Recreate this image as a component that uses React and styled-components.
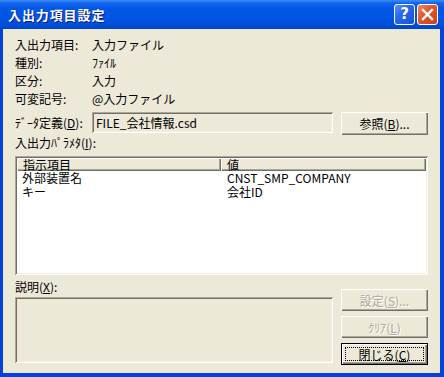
import React from 'react';
import styled, { createGlobalStyle } from 'styled-components';

const Global = createGlobalStyle`
  html, body { margin: 0; padding: 0; background: #fff; }
  body { font-family: "Noto Sans CJK JP", sans-serif; }
`;

const FONT = `"Noto Sans CJK JP", "Noto Sans CJK SC", sans-serif`;

const Window = styled.div`
  width: 444px;
  height: 377px;
  display: flex;
  flex-direction: column;
  font-family: ${FONT};
  font-size: 12px;
  color: #000;
`;

const TitleBar = styled.div`
  height: 29px;
  flex: none;
  display: flex;
  align-items: center;
  padding: 0 6px 0 8px;
  background: linear-gradient(
    to bottom,
    #3d8ef8 0px,
    #1465ee 3px,
    #0258e6 8px,
    #0055e3 18px,
    #0050da 24px,
    #0044c8 29px
  );
`;

const Title = styled.div`
  flex: 1;
  color: #fff;
  font-weight: bold;
  font-size: 13px;
  letter-spacing: 0.9px;
  line-height: 16px;
  text-shadow: 1px 1px #0a1a88;
  margin-top: 1px;
`;

const CaptionButton = styled.div`
  width: 21px;
  height: 21px;
  box-sizing: border-box;
  border: 1px solid #fff;
  border-radius: 3px;
  margin-left: 2px;
  display: flex;
  align-items: center;
  justify-content: center;
  background: ${(p) =>
    p.$close
      ? 'linear-gradient(135deg, #f08a62 0%, #e2582f 40%, #cc4018 100%)'
      : 'linear-gradient(135deg, #5a92fb 0%, #2a68ee 40%, #1a52d6 100%)'};
  color: #fff;
  font-family: "DejaVu Sans", sans-serif;
  font-weight: bold;
  font-size: 15px;
  line-height: 1;
`;

const Client = styled.div`
  flex: 1;
  background: #ece9d8;
  border-style: solid;
  border-color: #0841d6;
  border-width: 0 4px 4px 3px;
  padding: 7px 12px 0 12px;
  display: flex;
  flex-direction: column;
`;

const InfoGrid = styled.div`
  display: grid;
  grid-template-columns: 77px 1fr;
  grid-auto-rows: 18px;
  align-items: center;
  line-height: 14px;
`;

const Text = styled.span`
  white-space: nowrap;
  line-height: 14px;
`;

const FieldRow = styled.div`
  margin-top: 4px;
  display: grid;
  grid-template-columns: 77px 241px 95px;
  align-items: start;
`;

const FieldLabel = styled.span`
  line-height: 21px;
  white-space: nowrap;
`;

const sunken = `
  box-shadow:
    inset 1px 1px #aca899,
    inset -1px -1px #ffffff,
    inset 2px 2px #716f64,
    inset -2px -2px #f1efe2;
`;

const ReadOnlyField = styled.div`
  height: 21px;
  box-sizing: border-box;
  padding: 0 4px;
  background: #ece9d8;
  ${sunken}
  line-height: 21px;
  white-space: nowrap;
`;

const Button = styled.div`
  height: 22px;
  box-sizing: border-box;
  display: flex;
  align-items: center;
  justify-content: center;
  background: #ece9d8;
  white-space: nowrap;
  color: ${(p) => (p.$disabled ? '#aca899' : '#000')};
  text-shadow: ${(p) => (p.$disabled ? '1px 1px #ffffff' : 'none')};
  border: ${(p) => (p.$default ? '1px solid #000' : 'none')};
  box-shadow:
    inset 1px 1px #ffffff,
    inset -1px -1px #716f64,
    inset -2px -2px #aca899;
  padding: 3px;
`;

const BrowseButton = styled(Button)`
  margin-left: 8px;
  height: 23px;
`;

const FocusRect = styled.div`
  flex: 1;
  align-self: stretch;
  display: flex;
  align-items: center;
  justify-content: center;
  outline: 1px dotted #000;
  outline-offset: -1px;
`;

const U = styled.span`
  text-decoration: underline;
  text-underline-offset: 1px;
`;

const SectionLabel = styled.div`
  height: 14px;
  line-height: 14px;
  white-space: nowrap;
  margin-top: ${(p) => p.$mt || 0}px;
`;

const ListBox = styled.div`
  margin-top: 6px;
  height: 119px;
  box-sizing: border-box;
  padding: 2px;
  background: #fff;
  ${sunken}
`;

const ListRow = styled.div`
  display: grid;
  grid-template-columns: 204px 205px;
  height: ${(p) => (p.$header ? 13 : 14)}px;
  line-height: ${(p) => (p.$header ? 13 : 14)}px;
`;

const HeaderCell = styled.div`
  background: #ece9d8;
  box-shadow:
    inset 1px 1px #ffffff,
    inset -1px -1px #716f64,
    inset -2px -2px #aca899;
  padding-left: 6px;
  white-space: nowrap;
`;

const Cell = styled.div`
  padding-left: ${(p) => (p.$second ? 6 : 5)}px;
  white-space: nowrap;
`;

const Bottom = styled.div`
  margin-top: 5px;
  display: flex;
  gap: 8px;
`;

const DescColumn = styled.div`
  width: 318px;
  display: flex;
  flex-direction: column;
`;

const DescBox = styled.div`
  margin-top: 3px;
  height: 66px;
  background: #ece9d8;
  ${sunken}
`;

const ButtonColumn = styled.div`
  width: 87px;
  padding-top: 9px;
  display: flex;
  flex-direction: column;
  gap: 5px;
`;

export default function App() {
  const info = [
    ['入出力項目:', '入力ファイル'],
    ['種別:', 'ﾌｧｲﾙ'],
    ['区分:', '入力'],
    ['可変記号:', '@入力ファイル'],
  ];
  const rows = [
    ['外部装置名', 'CNST_SMP_COMPANY'],
    ['キー', '会社ID'],
  ];
  return (
    <>
      <Global />
      <Window>
        <TitleBar>
          <Title>入出力項目設定</Title>
          <CaptionButton>?</CaptionButton>
          <CaptionButton $close>
            <svg width="13" height="13" viewBox="0 0 13 13">
              <path d="M2 2 L11 11 M11 2 L2 11" stroke="#fff" strokeWidth="2.4" strokeLinecap="square" />
            </svg>
          </CaptionButton>
        </TitleBar>
        <Client>
          <InfoGrid>
            {info.map(([k, v]) => (
              <React.Fragment key={k}>
                <Text>{k}</Text>
                <Text>{v}</Text>
              </React.Fragment>
            ))}
          </InfoGrid>
          <FieldRow>
            <FieldLabel>
              ﾃﾞｰﾀ定義(<U>D</U>):
            </FieldLabel>
            <ReadOnlyField>FILE_会社情報.csd</ReadOnlyField>
            <BrowseButton>
              参照(<U>B</U>)...
            </BrowseButton>
          </FieldRow>
          <SectionLabel $mt={1}>
            入出力ﾊﾟﾗﾒﾀ(<U>I</U>):
          </SectionLabel>
          <ListBox>
            <ListRow $header>
              <HeaderCell>指示項目</HeaderCell>
              <HeaderCell>値</HeaderCell>
            </ListRow>
            {rows.map(([a, b]) => (
              <ListRow key={a}>
                <Cell>{a}</Cell>
                <Cell $second>{b}</Cell>
              </ListRow>
            ))}
          </ListBox>
          <Bottom>
            <DescColumn>
              <SectionLabel>
                説明(<U>X</U>):
              </SectionLabel>
              <DescBox />
            </DescColumn>
            <ButtonColumn>
              <Button $disabled>
                設定(<U>S</U>)...
              </Button>
              <Button $disabled>
                ｸﾘｱ(<U>L</U>)
              </Button>
              <Button $default>
                <FocusRect>
                  閉じる(<U>C</U>)
                </FocusRect>
              </Button>
            </ButtonColumn>
          </Bottom>
        </Client>
      </Window>
    </>
  );
}
